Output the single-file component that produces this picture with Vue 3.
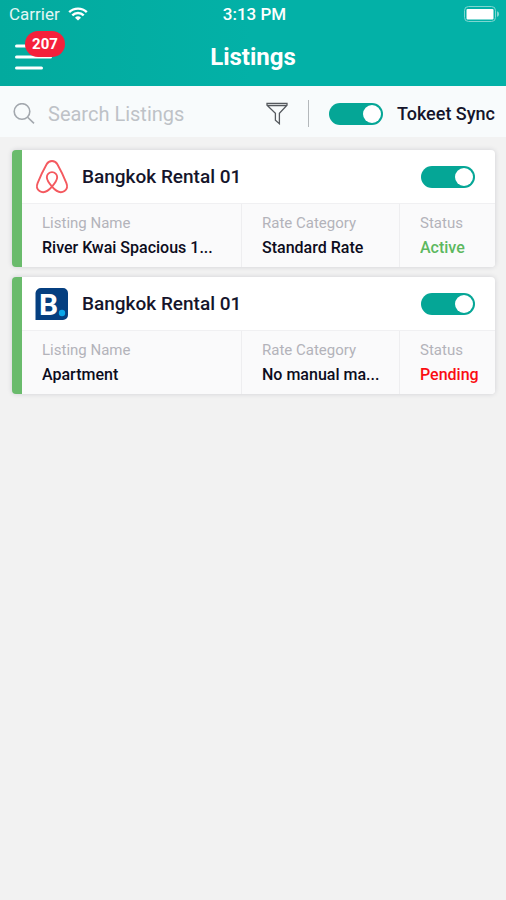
<script setup>
import { ref } from 'vue'

const query = ref('')
const sync = ref(true)
const listings = ref([
  { id: 1, channel: 'airbnb', title: 'Bangkok Rental 01', name: 'River Kwai Spacious 1...', rate: 'Standard Rate', status: 'Active', enabled: true },
  { id: 2, channel: 'booking', title: 'Bangkok Rental 01', name: 'Apartment', rate: 'No manual ma...', status: 'Pending', enabled: true }
])
</script>

<template>
  <div class="app">
    <header class="header">
      <div class="status-bar">
        <div class="carrier">
          <span>Carrier</span>
          <svg class="wifi" viewBox="0 0 20 14" aria-hidden="true">
            <path d="M1.2 5.2a12.5 12.5 0 0 1 17.6 0" />
            <path d="M4.3 8.4a8.1 8.1 0 0 1 11.4 0" />
            <path class="solid" d="M10 13.6 7 10.7a4.3 4.3 0 0 1 6 0z" />
          </svg>
        </div>
        <span class="clock">3:13 PM</span>
        <svg class="battery" viewBox="0 0 36 16" aria-hidden="true">
          <rect class="shell" x="0.5" y="0.5" width="31" height="15" rx="4" />
          <rect class="charge" x="2.5" y="3" width="27" height="10.5" rx="1" />
          <path class="cap" d="M33 5.2c2.8.8 2.8 4.8 0 5.6z" />
        </svg>
      </div>
      <div class="nav">
        <button class="menu" type="button" aria-label="Menu">
          <svg viewBox="0 0 38 28" aria-hidden="true">
            <path d="M2.5 3h24M2.5 14h34M2.5 25h25" />
          </svg>
          <span class="badge">207</span>
        </button>
        <h1>Listings</h1>
      </div>
    </header>

    <div class="toolbar">
      <label class="search">
        <svg viewBox="0 0 22 22" aria-hidden="true">
          <circle cx="9" cy="8.5" r="7.8" />
          <path d="m14.6 14.2 6.4 6.2" />
        </svg>
        <input v-model="query" type="text" placeholder="Search Listings" aria-label="Search Listings">
      </label>
      <button class="filter" type="button" aria-label="Filter">
        <svg viewBox="0 0 22 23" aria-hidden="true">
          <path d="M1 1.5h20v1.8l-7.600 8v10.400l-4-3.400v-7L1 3.300zM1.800 3.600h18.400" />
        </svg>
      </button>
      <label class="sync">
        <input v-model="sync" class="switch" type="checkbox">
        <span>Tokeet Sync</span>
      </label>
    </div>

    <main class="list">
      <article v-for="item in listings" :key="item.id" class="card">
        <div class="card-head">
          <svg v-if="item.channel === 'airbnb'" class="logo airbnb" viewBox="0 0 34 36" aria-hidden="true">
            <path d="M17 28.3c-3.5-4.1-5.5-7.3-5.5-10a5.5 5.5 0 0 1 11 0c0 2.7-2 5.9-5.5 10zm0 0c-5 5.8-9.8 7-13.3 4.5-2.8-2-3.3-5.2-2-8.4C3.8 19.2 8.5 9.5 11.3 4.5 12.7 2 14.6 1 17 1s4.3 1 5.7 3.5c2.8 5 7.5 14.700 9.600 19.900 1.300 3.200.8 6.400-2 8.400-3.500 2.500-8.300 1.300-13.300-4.500z" />
          </svg>
          <svg v-else class="logo" viewBox="0 0 34 34" aria-hidden="true">
            <path class="tile" d="M6 1h22a5 5 0 0 1 5 5v22a5 5 0 0 1-5 5H.5V6A5.5 5.5 0 0 1 6 1z" />
            <text x="4" y="28">B</text>
            <circle class="dot" cx="27" cy="26" r="3.2" />
          </svg>
          <h2>{{ item.title }}</h2>
          <input v-model="item.enabled" class="switch" type="checkbox" :aria-label="item.title">
        </div>
        <dl class="details">
          <div class="cell">
            <dt>Listing Name</dt>
            <dd>{{ item.name }}</dd>
          </div>
          <div class="cell">
            <dt>Rate Category</dt>
            <dd>{{ item.rate }}</dd>
          </div>
          <div class="cell">
            <dt>Status</dt>
            <dd :class="item.status.toLowerCase()">{{ item.status }}</dd>
          </div>
        </dl>
      </article>
    </main>
  </div>
</template>

<style>
body {
  margin: 0;
  background: #f2f2f2;
}
</style>

<style scoped>
.app {
  min-height: 100vh;
  font-family: Roboto, "Liberation Sans", sans-serif;
  color: #15152b;
}

.app * {
  box-sizing: border-box;
}

button {
  padding: 0;
  border: 0;
  background: none;
}

svg {
  display: block;
  flex: none;
}

.header {
  background: linear-gradient(90deg, #03aa9e, #03b1a7 50%);
  color: #fff;
}

.status-bar {
  display: grid;
  grid-template-columns: 1fr auto 1fr;
  align-items: center;
  height: 28px;
  padding: 0 6px 0 9px;
  font-size: 17px;
}

.carrier {
  display: flex;
  align-items: center;
  gap: 8px;
  color: #e2f6f4;
}

.wifi {
  width: 20px;
  height: 14px;
  fill: none;
  stroke: #fff;
  stroke-width: 2.4;
}

.wifi .solid {
  fill: #fff;
  stroke: none;
}

.clock {
  font-weight: 500;
}

.battery {
  width: 36px;
  height: 16px;
  justify-self: end;
}

.shell {
  fill: none;
  stroke: #7fd6d0;
}

.charge {
  fill: #fff;
}

.cap {
  fill: #7fd6d0;
}

.nav {
  display: grid;
  grid-template-columns: 1fr auto 1fr;
  align-items: center;
  height: 58px;
  padding: 0 14px;
}

.menu {
  position: relative;
  width: 38px;
  height: 28px;
}

.menu svg {
  width: 38px;
  height: 28px;
  stroke: #fff;
  stroke-width: 3;
  stroke-linecap: round;
}

.badge {
  position: absolute;
  top: -12px;
  left: 11px;
  width: 40px;
  border-radius: 13px;
  background: #f5203b;
  color: #fff;
  font: 700 15px/26px Roboto, sans-serif;
  text-align: center;
}

h1 {
  margin: 0;
  font-size: 24px;
  font-weight: 700;
  line-height: 28px;
}

.toolbar {
  display: flex;
  align-items: center;
  height: 51px;
  padding: 4px 11px 0 13px;
  background: #f8fbfc;
}

.search {
  display: flex;
  flex: 1;
  align-items: center;
  gap: 13px;
  min-width: 0;
}

.search svg {
  width: 22px;
  height: 22px;
  fill: none;
  stroke: #a3a8ae;
  stroke-width: 1.6;
}

.search input {
  width: 100%;
  min-width: 0;
  padding: 0;
  border: 0;
  outline: 0;
  background: none;
  color: inherit;
  font: 400 20px/24px Roboto, sans-serif;
}

.search input::placeholder {
  color: #bec2c7;
  opacity: 1;
}

.filter {
  padding-right: 20px;
  border-right: 1px solid #b4b8bb;
  height: 27px;
}

.filter svg {
  width: 22px;
  height: 23px;
  fill: none;
  stroke: #55595e;
  stroke-width: 1.3;
}

.sync {
  display: flex;
  align-items: center;
  gap: 14px;
  margin-left: 20px;
  font-size: 18px;
  font-weight: 500;
  white-space: nowrap;
}

.switch {
  display: flex;
  flex: none;
  align-items: center;
  width: 54px;
  height: 22px;
  margin: 0;
  padding: 0 2px;
  border-radius: 11px;
  background: #b9c0c4;
  appearance: none;
}

.switch::before {
  width: 18px;
  height: 18px;
  border-radius: 50%;
  background: #fff;
  content: "";
}

.switch:checked {
  justify-content: flex-end;
  background: #05a696;
}

.list {
  display: grid;
  gap: 10px;
  padding: 13px 11px 13px 12px;
}

.card {
  overflow: hidden;
  border-left: 10px solid #6abb6c;
  border-radius: 4px;
  background: #fff;
  box-shadow: 0 0 5px rgba(40, 40, 60, 0.16);
}

.card-head {
  display: flex;
  align-items: center;
  height: 54px;
  padding: 0 20px 0 13px;
  border-bottom: 1px solid #f0f0f2;
}

.logo {
  width: 34px;
  height: 34px;
  overflow: visible;
}

.airbnb {
  height: 36px;
  padding: 1px;
  fill: none;
  stroke: #f4595f;
  stroke-width: 2;
}

.tile {
  fill: #053f80;
}

.logo text {
  fill: #fff;
  font: 700 30px Roboto, sans-serif;
}

.dot {
  fill: #09a5e8;
}

h2 {
  flex: 1;
  margin: 0 0 0 13px;
  font-size: 19px;
  font-weight: 500;
  line-height: 24px;
}

.details {
  display: grid;
  grid-template-columns: 219fr 158fr 96fr;
  margin: 0;
  background: #fafafb;
}

.cell {
  min-width: 0;
  padding: 7px 0 7px 20px;
}

.cell + .cell {
  border-left: 1px solid #eeeef0;
}

dt {
  color: #b3b3ba;
  font-size: 15px;
  line-height: 24px;
}

dd {
  overflow: hidden;
  margin: 0;
  color: #0c0c20;
  font-size: 16px;
  font-weight: 500;
  line-height: 25px;
  text-overflow: ellipsis;
  white-space: nowrap;
}

.active {
  color: #5cb860;
}

.pending {
  color: #fb0d12;
}
</style>
